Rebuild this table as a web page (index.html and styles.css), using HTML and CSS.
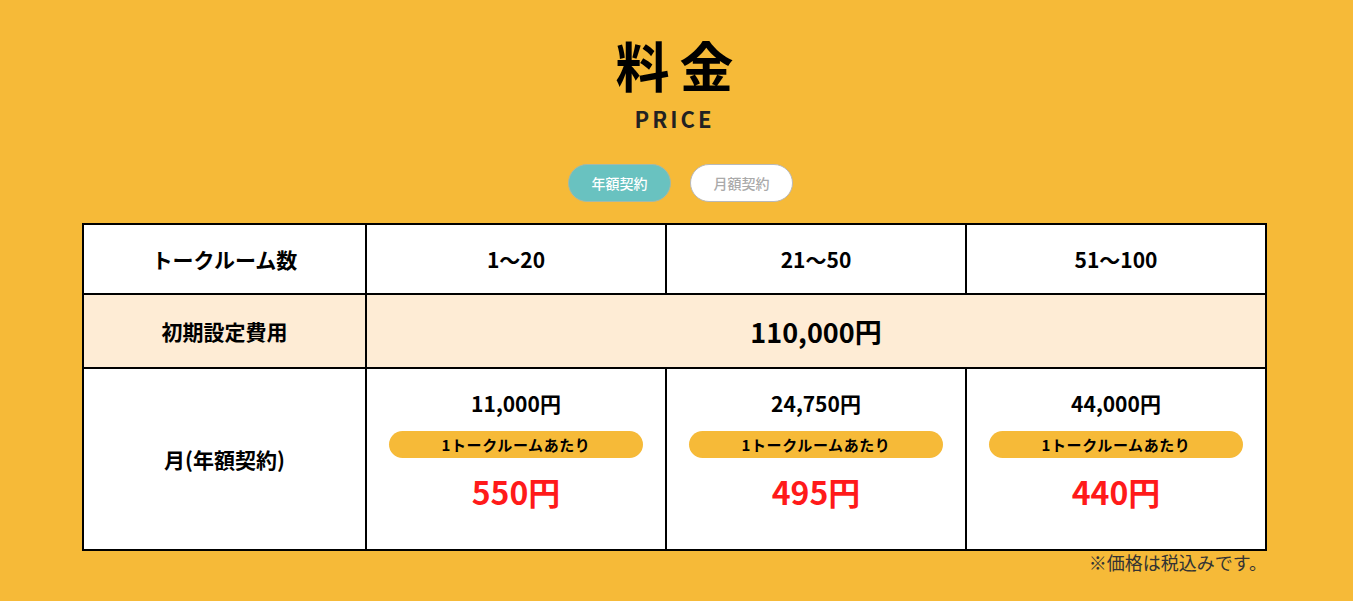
FILE: index.html
```html
<!DOCTYPE html>
<html lang="ja">
<head>
<meta charset="utf-8">
<title>料金</title>
<link rel="stylesheet" href="styles.css">
</head>
<body>
<section class="price">
  <h1 class="title">料金</h1>
  <p class="subtitle">PRICE</p>
  <div class="tabs">
    <button class="tab tab-active">年額契約</button>
    <button class="tab">月額契約</button>
  </div>
  <table class="table">
    <colgroup>
      <col class="c-label">
      <col class="c-val">
      <col class="c-val">
      <col class="c-val">
    </colgroup>
    <tr class="row-head">
      <th>トークルーム数</th>
      <td>1〜20</td>
      <td>21〜50</td>
      <td>51〜100</td>
    </tr>
    <tr class="row-init">
      <th>初期設定費用</th>
      <td colspan="3" class="init-val">110,000円</td>
    </tr>
    <tr class="row-month">
      <th>月(年額契約)</th>
      <td>
        <div class="month">11,000円</div>
        <div class="pill">1トークルームあたり</div>
        <div class="unit">550円</div>
      </td>
      <td>
        <div class="month">24,750円</div>
        <div class="pill">1トークルームあたり</div>
        <div class="unit">495円</div>
      </td>
      <td>
        <div class="month">44,000円</div>
        <div class="pill">1トークルームあたり</div>
        <div class="unit">440円</div>
      </td>
    </tr>
  </table>
  <p class="note">※価格は税込みです。</p>
</section>
</body>
</html>
```

FILE: styles.css
```css
html, body {
  margin: 0;
  padding: 0;
  background: #f6ba38;
}
body {
  font-family: "Noto Sans CJK JP", "Noto Sans", sans-serif;
  color: #000;
}
.price {
  width: 1185px;
  margin: 0 auto;
  padding-top: 29px;
  position: relative;
  left: -2px;
}
.title {
  margin: 0;
  text-align: center;
  font-size: 54px;
  font-weight: 700;
  letter-spacing: 10px;
  line-height: 72px;
  padding-left: 10px;
}
.subtitle {
  margin: 2px 0 0;
  text-align: center;
  font-size: 22px;
  font-weight: 700;
  letter-spacing: 3px;
  line-height: 30px;
  color: #222;
}
.tabs {
  display: flex;
  justify-content: center;
  gap: 19px;
  margin-top: 31px;
  margin-left: 12px;
}
.tab {
  width: 103px;
  height: 38px;
  border-radius: 19px;
  border: 1px solid #b9b9b9;
  background: #fff;
  color: #aaa;
  font-family: inherit;
  font-size: 14px;
  font-weight: 500;
  padding: 0;
}
.tab-active {
  background: #69c2c0;
  border-color: #a5b9a8;
  color: #fff;
}
.table {
  margin-top: 21px;
  width: 1185px;
  border-collapse: collapse;
  table-layout: fixed;
  background: #fff;
}
.c-label { width: 283px; }
.c-val { width: 300px; }
.table th, .table td {
  border: 2px solid #000;
  text-align: center;
  padding: 0;
  font-weight: 700;
}
.row-head th, .row-head td {
  height: 68px;
  font-size: 21px;
}
.row-init th, .row-init td {
  height: 72px;
  background: #feecd5;
}
.row-init th { font-size: 21px; }
.init-val { font-size: 27px; }
.row-month th {
  height: 180px;
  font-size: 21px;
}
.row-month td {
  vertical-align: top;
  padding: 18px 22px 0;
}
.month {
  font-size: 21px;
  line-height: 32px;
}
.pill {
  margin-top: 12px;
  height: 27px;
  line-height: 27px;
  border-radius: 14px;
  background: #f6ba38;
  font-size: 15px;
  letter-spacing: 0.6px;
  font-weight: 700;
}
.unit {
  margin-top: 13px;
  font-size: 32px;
  line-height: 40px;
  color: #ff1a1a;
}
.note {
  margin: 0;
  padding-right: 0;
  text-align: right;
  font-size: 18px;
  line-height: 22px;
  color: #333;
}
```
